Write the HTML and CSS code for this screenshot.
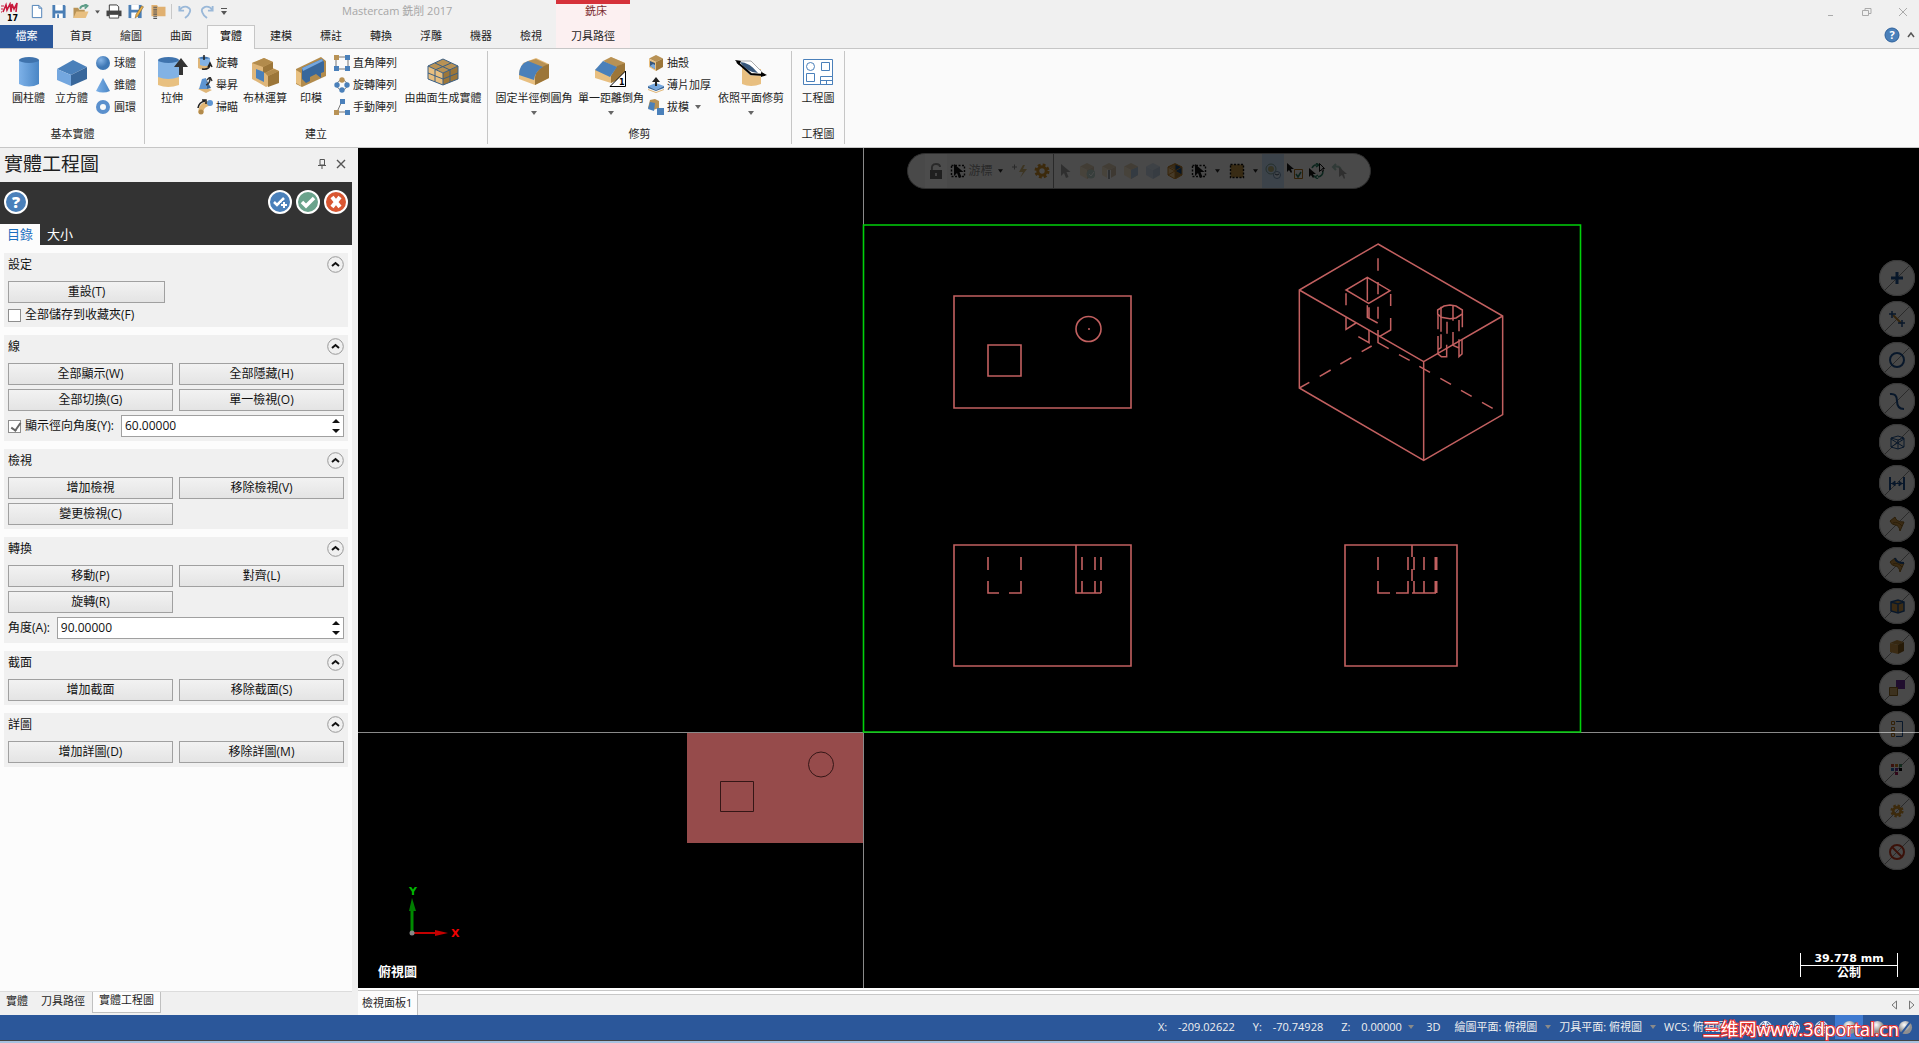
FILE: index.html
```html
<!DOCTYPE html>
<html lang="zh-Hant">
<head>
    <meta charset="UTF-8">
    <meta name="viewport" content="width=device-width, initial-scale=1.0">
    <title>Mastercam 銑削 2017</title>
    <link rel="stylesheet" href="styles.css">
</head>
<body>
    <!-- shared icons -->
    <svg class="defs" width="0" height="0" aria-hidden="true">
        <defs>
            <linearGradient id="blueGrad"><stop offset="0" stop-color="#7db1e8"/><stop offset="1" stop-color="#4a86c5"/></linearGradient>
            <radialGradient id="ball" cx=".35" cy=".3"><stop offset="0" stop-color="#86b4e6"/><stop offset="1" stop-color="#3f78b5"/></radialGradient>
            <radialGradient id="shade" cx=".4" cy=".3"><stop offset="0" stop-color="#fff"/><stop offset="1" stop-color="#8f8f8f"/></radialGradient>
        </defs>
        <symbol id="caret" viewBox="0 0 6 4"><path d="M0 0h6L3 4z" fill="currentColor"/></symbol>
        <symbol id="cursor" viewBox="0 0 16 16"><path d="M4 1v12l3-3 2 5 2.500-1-2-5h4z" fill="#222"/></symbol>
        <symbol id="cursor-box" viewBox="0 0 16 16"><path d="M1.500 2.500h13v11h-13z" fill="none" stroke="#111" stroke-width="1.400" stroke-dasharray="2 1.500"/><path d="M4 1v12l3-3 2 5 2.500-1-2-5h4z" fill="#111"/></symbol>
        <symbol id="gear" viewBox="0 0 16 16"><circle cx="8" cy="8" r="6" fill="none" stroke="#c88a28" stroke-width="3" stroke-dasharray="2.700 2"/><circle cx="8" cy="8" r="4.200" fill="none" stroke="#c88a28" stroke-width="3"/></symbol>
        <symbol id="box" viewBox="0 0 16 16"><path d="M8 0l7 3.500L8 7 1 3.500z" fill="#b89255"/><path d="M1 3.500L8 7v9l-7-4z" fill="#e8bf80"/><path d="M15 3.500L8 7v9l7-4z" fill="#9c7639"/></symbol>
        <symbol id="box-blue" viewBox="0 0 16 16"><path d="M8 0l7 3.500L8 7 1 3.500z" fill="#9db9dc"/><path d="M1 3.500L8 7v9l-7-4z" fill="#86a8d5"/><path d="M15 3.500L8 7v9l7-4z" fill="#5f86b8"/></symbol>
        <symbol id="chevron" viewBox="0 0 17 17"><circle cx="8.500" cy="8.500" r="7.800" fill="#f0f0f0" stroke="#999"/><path d="M5 10l3.500-3 3.500 3" fill="none" stroke="#111" stroke-width="2"/></symbol>
        <symbol id="updown" viewBox="0 0 8 14"><path d="M0 4h8L4 0zM0 10h8l-4 4z" fill="#111"/></symbol>
        <symbol id="globe" viewBox="0 0 16 16"><circle cx="8" cy="8" r="6.500" fill="none" stroke="#fff"/><path d="M8 1.500v13M1.500 8h13M3 4q5 3 10 0M3 12q5-3 10 0M8 1.500q-6 6 0 13 6-6 0-13" fill="none" stroke="#fff"/></symbol>
    </svg>

    <header class="titlebar">
        <div class="quick">
            <svg class="logo" viewBox="0 0 20 20"><path d="M3 10l3-7 1 5 3-6 1 7M11 10l1-8 2 5 3-6-1 9" fill="none" stroke="#c8193c" stroke-width="1.600"/><path d="M1 4h3M1 7h2M1 10h1" stroke="#c8193c"/><text x="7" y="19" class="logo-text">17</text></svg>
            <button class="q" aria-label="開新檔案"><svg viewBox="0 0 16 16"><path d="M3 1.500h7l3 3v10H3z" fill="#fff" stroke="#4a7eb5"/><path d="M10 1.500v3h3" fill="none" stroke="#4a7eb5"/></svg></button>
            <button class="q" aria-label="儲存"><svg viewBox="0 0 16 16"><path d="M1 1h13l1 1v13H1z" fill="#4a7eb5"/><path d="M4 1h8v6H4zM4 10h8v5H4z" fill="#fff"/><path d="M6 11h2v4H6z" fill="#4a7eb5"/></svg></button>
            <button class="q" aria-label="開啟"><svg viewBox="0 0 16 16"><path d="M0 4h5l1 2h6v9H0z" fill="#b89255"/><path d="M3 8h13l-3 7H0z" fill="#e8bf80"/><path d="M7 5q1-4 6-3M12 0l3 2-3 3" fill="none" stroke="#5e9d88" stroke-width="2"/></svg></button>
            <button class="q q-caret" aria-label="最近的檔案"><svg viewBox="0 0 6 4"><use href="#caret"/></svg></button>
            <button class="q" aria-label="列印"><svg viewBox="0 0 16 16"><path d="M3 1h8l2 2v5H3z" fill="#fff" stroke="#333"/><path d="M0 7h16v6H0z" fill="#444"/><path d="M3 11h10v4H3z" fill="#fff" stroke="#444"/></svg></button>
            <button class="q" aria-label="另存新檔"><svg viewBox="0 0 16 16"><path d="M0 1h14v14H0z" fill="#4a7eb5"/><path d="M3 1h8v5H3zM3 9h7v6H3z" fill="#fff"/><path d="M7 15l1-4 6-9 2 1-6 10z" fill="#e8b04a" stroke="#6d4d1c" stroke-width=".5"/></svg></button>
            <button class="q" aria-label="壓縮檔"><svg viewBox="0 0 16 16"><path d="M1 1h6l1 2h8v10H1z" fill="#e0b070"/><path d="M5 3v13" stroke="#555" stroke-width="4" stroke-dasharray="1 1"/></svg></button>
            <span class="q-sep"></span>
            <button class="q" aria-label="復原"><svg viewBox="0 0 16 16"><path d="M2 2v5h5M2 7q3-5 8-4 5 2 3 6-1 3-5 6" fill="none" stroke="#9ab8d8" stroke-width="2"/></svg></button>
            <button class="q" aria-label="重做"><svg viewBox="0 0 16 16"><path d="M14 2v5H9M14 7q-3-5-8-4-5 2-3 6 1 3 5 6" fill="none" stroke="#9ab8d8" stroke-width="2"/></svg></button>
            <button class="q q-more" aria-label="自訂"><svg viewBox="0 0 6 7"><path d="M0 0h6v1H0zM0 3h6L3 7z" fill="#555"/></svg></button>
        </div>
        <h1 class="app-title">Mastercam 銑削 2017</h1>
        <div class="context-title">銑床</div>
        <div class="window-buttons">
            <button aria-label="最小化"><svg viewBox="0 0 10 10"><path d="M2 8.500h5" stroke="#aaa"/></svg></button>
            <button aria-label="還原"><svg viewBox="0 0 10 10"><path d="M.5 3.500h6v5h-6zM3 3V1.500h6v5H7" fill="none" stroke="#aaa"/></svg></button>
            <button aria-label="關閉"><svg viewBox="0 0 10 10"><path d="M1 1l8 8M9 1L1 9" stroke="#aaa"/></svg></button>
        </div>
    </header>

    <nav class="tabs">
        <a href="#" class="tab file">檔案</a>
        <a href="#" class="tab">首頁</a>
        <a href="#" class="tab">繪圖</a>
        <a href="#" class="tab">曲面</a>
        <a href="#" class="tab active">實體</a>
        <a href="#" class="tab">建模</a>
        <a href="#" class="tab">標註</a>
        <a href="#" class="tab">轉換</a>
        <a href="#" class="tab">浮雕</a>
        <a href="#" class="tab">機器</a>
        <a href="#" class="tab">檢視</a>
        <a href="#" class="tab mill">刀具路徑</a>
        <div class="tabs-right">
            <button aria-label="說明"><svg width="16" height="16" viewBox="0 0 16 16"><circle cx="8" cy="8" r="7" fill="#4a80ba" stroke="#2d609b"/><text x="8" y="12" class="q-mark">?</text></svg></button>
            <button aria-label="收合功能區"><svg width="8" height="6" viewBox="0 0 8 6"><path d="M1 5l3-4 3 4" fill="none" stroke="#555" stroke-width="1.500"/></svg></button>
        </div>
    </nav>

    <section class="ribbon">
        <div class="group">
            <div class="group-body primitives">
                <button class="big"><svg viewBox="0 0 32 32"><path d="M6 4v24q10 5 20 0V4z" fill="url(#blueGrad)"/><ellipse cx="16" cy="4" rx="10" ry="3" fill="#3f73ad"/></svg>圓柱體</button>
                <button class="big"><svg viewBox="0 0 32 32"><path d="M17 4l14 7-16 8L1 13z" fill="#4a80ba"/><path d="M1 13l14 6v11L1 24z" fill="#74a7df"/><path d="M31 11v12l-16 7V19z" fill="#38679b"/></svg>立方體</button>
                <div class="small-col">
                    <button class="small"><svg viewBox="0 0 16 16"><circle cx="8" cy="8" r="7" fill="url(#ball)"/></svg>球體</button>
                    <button class="small"><svg viewBox="0 0 16 16"><path d="M8 1l7 13q-7 3-14 0z" fill="url(#blueGrad)"/></svg>錐體</button>
                    <button class="small"><svg viewBox="0 0 16 16"><circle cx="8" cy="8" r="5" fill="none" stroke="#5b90cd" stroke-width="4"/></svg>圓環</button>
                </div>
            </div>
            <div class="group-label">基本實體</div>
        </div>

        <div class="group">
            <div class="group-body create">
                <button class="big"><svg viewBox="0 0 32 32"><path d="M2 4v25q10 4 21 0V4z" fill="#e8c080"/><path d="M2 4v17q10 4 21 0V4z" fill="#82b2e4"/><ellipse cx="12.500" cy="4" rx="10.500" ry="3" fill="#3f73ad"/><path d="M23 19v-8h-5l7-9 7 9h-5v8z" fill="#333"/></svg>拉伸</button>
                <div class="small-col">
                    <button class="small"><svg viewBox="0 0 16 16"><path d="M1 3v10q6 3 12 0V3z" fill="#dfb679"/><path d="M3 3v7q5 2 10 0V3z" fill="#82b2e4"/><path d="M1 3q6-3 12 0-6 2-12 0" fill="#3f73ad"/><path d="M7 0v5M5 14q7 1 8-4M11 12l2-4 2 4" stroke="#222" stroke-width="1.500" fill="none"/></svg>旋轉</button>
                    <button class="small"><svg viewBox="0 0 16 16"><path d="M1 12l6-2 8 3-6 3z" fill="#dfb679"/><path d="M5 2l4-1 1 11H2z" fill="#5e95d2"/><path d="M9 2l5 9-4 1z" fill="#38679b"/><path d="M9 8q4-1 4-7M10 3l3-3 2 4" fill="none" stroke="#333" stroke-width="1.500"/></svg>舉昇</button>
                    <button class="small"><svg viewBox="0 0 16 16"><path d="M4 14Q3 6 13 4" fill="none" stroke="#e0b574" stroke-width="5"/><circle cx="4" cy="13" r="2.500" fill="#b28b4c"/><circle cx="13" cy="4" r="3" fill="#5e95d2"/><path d="M1 9q1-6 7-7M5 1h4v4" fill="none" stroke="#222" stroke-width="1.500"/></svg>掃瞄</button>
                </div>
                <button class="big"><svg viewBox="0 0 32 32"><path d="M3 7l12-5 9 4v6l6 3v11l-13 5-5-3-9-5z" fill="#dfb679"/><path d="M3 7l12-5 9 4-10 5zM16 17l9-4 5 2-11 5z" fill="#b28b4c"/><path d="M24 6v7l-8 4-2-1v-5zM19 20l11-5v12l-11 4z" fill="#9c7639"/><path d="M7 13l8 3v10l-8-4z" fill="#4a80ba"/></svg>布林運算</button>
                <button class="big"><svg viewBox="0 0 32 32"><path d="M1 13L26 1l5 4v15L7 31l-6-3z" fill="#b28b4c"/><path d="M1 14l5 3v13l-5-3z" fill="#e8c080"/><path d="M7 12L27 3l2 3v10l-3 1v5l-5-4-6 3v4l-4 2-4-4z" fill="#38679b"/><path d="M7 12L27 3l1 2-20 10z" fill="#74a7df"/></svg>印模</button>
                <div class="small-col">
                    <button class="small"><svg viewBox="0 0 16 16"><path d="M2 2h12v12H2z" fill="none" stroke="#777"/><path d="M0 0h5v5H0z" fill="#b89255"/><path d="M11 0h5v5h-5zM0 11h5v5H0zM11 11h5v5h-5z" fill="#4a80ba"/></svg>直角陣列</button>
                    <button class="small"><svg viewBox="0 0 16 16"><circle cx="8" cy="8" r="5" fill="none" stroke="#777"/><circle cx="8" cy="3" r="2.700" fill="#b89255"/><circle cx="3" cy="8" r="2.700" fill="#4a80ba"/><circle cx="13" cy="8" r="2.700" fill="#4a80ba"/><circle cx="8" cy="13" r="2.700" fill="#4a80ba"/></svg>旋轉陣列</button>
                    <button class="small"><svg viewBox="0 0 16 16"><path d="M8 2L3 13h10" fill="none" stroke="#777"/><path d="M0 11h5v5H0z" fill="#b89255"/><path d="M6 0h5v5H6zM11 11h5v5h-5z" fill="#4a80ba"/></svg>手動陣列</button>
                </div>
                <button class="big"><svg viewBox="0 0 32 32"><path d="M1 10l15-7 15 7-15 7z" fill="#b89255"/><path d="M1 10l15 7v12L1 23z" fill="#e8bf80"/><path d="M31 10l-15 7v12l15-6z" fill="#9c7639"/><path d="M1 10l15-7 15 7-15 7zM1 10v13l15 6 15-6V10M16 17v12M8 7l15 7v12M24 7L8 14v12M1 17l15 6 15-6" fill="none" stroke="#3b5f83"/></svg>由曲面生成實體</button>
            </div>
            <div class="group-label">建立</div>
        </div>

        <div class="group">
            <div class="group-body modify">
                <button class="big"><svg viewBox="0 0 32 32"><path d="M5 7l13-5 13 6v14l-14 7L1 23V16z" fill="#e8bf80"/><path d="M10 5l8-2 13 6-12 5z" fill="#b89255"/><path d="M31 8v14l-14 7V21q1-9 14-13" fill="#9c7639"/><path d="M1 19Q1 8 10 5l15 6q-8 4-9 13z" fill="#4a80ba"/></svg>固定半徑倒圓角<svg class="caret"><use href="#caret"/></svg></button>
                <button class="big"><svg viewBox="0 0 32 32"><path d="M0 14L16 1l14 6v13l-14 7L0 22z" fill="#e8bf80"/><path d="M8 5l8-4 14 6-9 4z" fill="#b89255"/><path d="M30 7v13l-14 7v-7l6-10z" fill="#9c7639"/><path d="M0 14L8 5l14 6-7 10z" fill="#4a80ba"/><path d="M15 30.500L30.500 15v15.500z" fill="#fff" stroke="#000"/><text x="24" y="29" class="one">1</text></svg>單一距離倒角<svg class="caret"><use href="#caret"/></svg></button>
                <div class="small-col">
                    <button class="small"><svg viewBox="0 0 16 16"><use href="#box"/><path d="M2 6l5 2v6l-5-3z" fill="#38577b"/><path d="M2 11l3-2 2 1v4z" fill="#7aa9dc"/></svg>抽殼</button>
                    <button class="small"><svg viewBox="0 0 16 16"><path d="M0 9l8-3 8 3-8 4z" fill="#74a7df"/><path d="M0 9l8 4v1l-8-3zM16 9l-8 4v1l8-3z" fill="#38679b"/><path d="M0 12l8 3 8-3v1l-8 3-8-3z" fill="#e0b574"/><path d="M7 9V5H4l4-5 4 5H9v4z" fill="#222"/></svg>薄片加厚</button>
                    <button class="small"><svg viewBox="0 0 16 16"><path d="M2 1l5-1 4 2v7l-6 2-5-2z" fill="#b89255"/><path d="M2 3l5 1-1 8-6-2z" fill="#4a80ba"/><path d="M9 9h7v7H9z" fill="#4a80ba"/></svg>拔模<svg class="caret"><use href="#caret"/></svg></button>
                </div>
                <button class="big"><svg viewBox="0 0 32 32"><path d="M7 12v16q9 4 19 0V13z" fill="#e8bf80"/><path d="M2 5h14l14 14H15z" fill="#fff" stroke="#aaa"/><path d="M5 6q9 0 18 11Q11 16 5 6" fill="#38577b"/><path d="M2 6l14 12 14 1" fill="none" stroke="#000" stroke-width="2"/><path d="M0 4l6 1-2 4zM32 19l-6-3v5z"/></svg>依照平面修剪<svg class="caret"><use href="#caret"/></svg></button>
            </div>
            <div class="group-label">修剪</div>
        </div>

        <div class="group">
            <div class="group-body drawing">
                <button class="big"><svg viewBox="0 0 32 32"><g fill="#fff" stroke="#4a80ba"><path d="M1.500 3.500h29v25h-29z"/><circle cx="8.500" cy="10.500" r="4"/><path d="M19.500 6.500h8v8h-8zM4.500 17.500h8v8h-8zM18.500 20.500h12v8h-12zM18.500 24.500h12M24.500 24.500v4"/></g></svg>工程圖</button>
            </div>
            <div class="group-label">工程圖</div>
        </div>
    </section>

    <main class="main">
        <aside class="side">
            <div class="panel-head">
                <h2>實體工程圖</h2>
                <button aria-label="釘選"><svg viewBox="0 0 10 10"><path d="M3 .500h4.500V6H3zM1 6.500h8M5 6v4" fill="none" stroke="#555"/></svg></button>
                <button aria-label="關閉面板"><svg viewBox="0 0 10 10"><path d="M1 1l8 8M9 1L1 9" stroke="#555" stroke-width="1.400"/></svg></button>
            </div>
            <div class="panel-bar">
                <div class="actions">
                    <button class="round" aria-label="說明"><svg viewBox="0 0 24 24"><circle cx="12" cy="12" r="11" fill="#4a80ba" stroke="#fff" stroke-width="2"/><text x="12" y="18" class="help-mark">?</text></svg></button>
                    <span class="spacer"></span>
                    <button class="round" aria-label="確定並建立新操作"><svg viewBox="0 0 24 24"><circle cx="12" cy="12" r="11" fill="#4a80ba" stroke="#fff" stroke-width="2"/><path d="M6 12l3 3 7-7" fill="none" stroke="#fff" stroke-width="2.500"/><path d="M16 11v8M12 15h8" stroke="#4a80ba" stroke-width="4"/><path d="M16 12v6M13 15h6" stroke="#fff" stroke-width="2"/></svg></button>
                    <button class="round" aria-label="確定"><svg viewBox="0 0 24 24"><circle cx="12" cy="12" r="11" fill="#6aa38c" stroke="#fff" stroke-width="2"/><path d="M6 12l4 4 8-8" fill="none" stroke="#fff" stroke-width="3.500"/></svg></button>
                    <button class="round" aria-label="取消"><svg viewBox="0 0 24 24"><circle cx="12" cy="12" r="11" fill="#d95732" stroke="#fff" stroke-width="2"/><path d="M8 7l8 10M16 7L8 17" stroke="#fff" stroke-width="4"/></svg></button>
                </div>
                <div class="page-tabs">
                    <a href="#" class="current">目錄</a>
                    <a href="#">大小</a>
                </div>
            </div>

            <div class="sections">
                <section class="card">
                    <h3>設定 <button class="fold" aria-label="收合設定"><svg viewBox="0 0 17 17"><use href="#chevron"/></svg></button></h3>
                    <button class="btn reset">重設(T)</button>
                    <label class="check"><input type="checkbox"> 全部儲存到收藏夾(F)</label>
                </section>
                <section class="card">
                    <h3>線 <button class="fold" aria-label="收合線"><svg viewBox="0 0 17 17"><use href="#chevron"/></svg></button></h3>
                    <div class="btn-grid">
                        <button class="btn">全部顯示(W)</button>
                        <button class="btn">全部隱藏(H)</button>
                        <button class="btn">全部切換(G)</button>
                        <button class="btn">單一檢視(O)</button>
                    </div>
                    <div class="field">
                        <label class="check"><input type="checkbox" checked> 顯示徑向角度(Y):</label>
                        <span class="spin"><input type="text" value="60.00000" aria-label="徑向角度"><svg viewBox="0 0 8 14"><use href="#updown"/></svg></span>
                    </div>
                </section>
                <section class="card">
                    <h3>檢視 <button class="fold" aria-label="收合檢視"><svg viewBox="0 0 17 17"><use href="#chevron"/></svg></button></h3>
                    <div class="btn-grid">
                        <button class="btn">增加檢視</button>
                        <button class="btn">移除檢視(V)</button>
                        <button class="btn">變更檢視(C)</button>
                    </div>
                </section>
                <section class="card">
                    <h3>轉換 <button class="fold" aria-label="收合轉換"><svg viewBox="0 0 17 17"><use href="#chevron"/></svg></button></h3>
                    <div class="btn-grid">
                        <button class="btn">移動(P)</button>
                        <button class="btn">對齊(L)</button>
                        <button class="btn">旋轉(R)</button>
                    </div>
                    <div class="field">
                        <label for="angle">角度(A):</label>
                        <span class="spin"><input type="text" id="angle" value="90.00000"><svg viewBox="0 0 8 14"><use href="#updown"/></svg></span>
                    </div>
                </section>
                <section class="card">
                    <h3>截面 <button class="fold" aria-label="收合截面"><svg viewBox="0 0 17 17"><use href="#chevron"/></svg></button></h3>
                    <div class="btn-grid">
                        <button class="btn">增加截面</button>
                        <button class="btn">移除截面(S)</button>
                    </div>
                </section>
                <section class="card">
                    <h3>詳圖 <button class="fold" aria-label="收合詳圖"><svg viewBox="0 0 17 17"><use href="#chevron"/></svg></button></h3>
                    <div class="btn-grid">
                        <button class="btn">增加詳圖(D)</button>
                        <button class="btn">移除詳圖(M)</button>
                    </div>
                </section>
            </div>

            <div class="side-tabs">
                <a href="#">實體</a>
                <a href="#">刀具路徑</a>
                <a href="#" class="current">實體工程圖</a>
            </div>
        </aside>

        <section class="view">
            <div class="canvas">
                <svg class="drawing-area" viewBox="358 148 1561 840" preserveAspectRatio="xMinYMin meet">
                    <!-- shaded part -->
                    <path d="M687 733h176v110H687z" fill="#964b4b"/>
                    <g fill="none" stroke="#351616">
                        <path d="M720.500 781.500h33v30h-33z"/>
                        <circle cx="821" cy="764.500" r="12.500"/>
                    </g>
                    <!-- axes -->
                    <path d="M863.500 148v840M358 732.500h1561" stroke="#8a8a8a"/>
                    <!-- sheet -->
                    <path d="M863.500 225h717v507h-717z" fill="none" stroke="#00d00a" stroke-width="1.600"/>
                    <g fill="none" stroke="#c26060" stroke-width="1.600">
                        <!-- top view -->
                        <path d="M954 296h177v112H954zM988 345h33v31h-33z"/>
                        <circle cx="1088.500" cy="329" r="12.500"/>
                        <path d="M1088 329h2"/>
                        <!-- front view -->
                        <path d="M954 545h177v121H954zM1076 545v48h25"/>
                        <path d="M988 557v13M988 581v12h11M1021 557v13M1021 581v12h-12M1082 557v13M1082 581v12M1095 557v13M1095 581v12M1101 557v13M1101 581v12"/>
                        <!-- side view -->
                        <path d="M1345 545h112v121h-112zM1412 545v12M1412 569v12"/>
                        <path d="M1378 557v13M1378 581v12h12M1408 557v13M1408 581v12h-12M1414 557v13M1414 581v12M1424 557v13M1424 581v12M1412 593h24"/>
                        <path d="M1436 557v13M1436 581v12" stroke-width="3"/>
                    </g>
                    <!-- isometric view -->
                    <svg x="1280" y="230" width="240" height="250" viewBox="0 0 720 750">
                        <g fill="none" stroke="#c26060" stroke-width="4.500">
                            <path d="M294 42L668 258V554L431 691L58 474V180zM58 180L431 395V691M431 395L668 258"/>
                            <path d="M262 142L330 182L266 220L198 180zM262 142V212"/>
                            <path d="M294 85v37M294 156v37M294 230v36M294 300v38l32 18M198 190v36M198 262v36l30-19M332 192v36M332 264v36l-34 20M262 226v36l31 17M267 232v32M267 300v38l-32-18"/>
                            <path d="M58 474l30-17M119 439l33-19M181 402l33-19M245 365l30-17M357 374l32 17M418 409l32 18M481 445l32 18M543 481l32 18M606 517l32 18"/>
                            <path d="M473 240L492 228L510 225L528 228L547 240V252L528 264L510 266L484 262L473 252z"/>
                            <path d="M474 252v46M483 230v75M519 226v46M501 275v36M537 270v34M547 252v40M474 318v54l10 8h16v-36M483 313v40l-9 6M519 306v40l18 8M537 328v52l9-8v-44"/>
                        </g>
                    </svg>
                    <!-- coordinate triad -->
                    <path d="M412 932V908" stroke="#008a00" stroke-width="3"/><path d="M409 911l3-13 4 13z" fill="#007d00"/>
                    <path d="M413 933h24" stroke="#c40000" stroke-width="2"/><path d="M435 930l13 3-13 3z" fill="#c40000"/>
                    <circle cx="412" cy="933" r="2.500" fill="#888"/>
                    <text x="409" y="895" class="axis-label" fill="#00b400">Y</text>
                    <text x="451" y="937" class="axis-label" fill="#f00000">X</text>
                    <text x="378" y="976" class="view-name">俯視圖</text>
                    <!-- scale bar -->
                    <path d="M1800.500 953v24M1897.500 953v24M1800 965.500h98" stroke="#fff"/>
                    <text x="1849" y="962" class="scale-text">39.778 mm</text>
                    <text x="1849" y="977" class="scale-unit">公制</text>
                </svg>

                <div class="select-bar">
                    <button class="tool lock" aria-label="鎖定"><svg viewBox="0 0 16 16"><path d="M2 7h12v9H2z" fill="#666"/><path d="M4 7q-1-6 4-6 4 0 4 3" fill="none" stroke="#888" stroke-width="2"/><path d="M7 10h2v3H7z" fill="#ddd"/></svg></button>
                    <button class="tool" aria-label="自動游標"><svg viewBox="0 0 16 16"><use href="#cursor-box"/></svg></button>
                    <span class="tool-text">游標</span>
                    <button class="tool drop" aria-label="游標選項"><svg class="caret"><use href="#caret"/></svg></button>
                    <button class="tool" aria-label="快速點"><svg viewBox="0 0 16 16"><path d="M0 4h5M2.500 1.500v5" stroke="#888"/><path d="M11 2L7 9h4l-3 6 7-9h-4l2-4z" fill="#c9ae70"/></svg></button>
                    <button class="tool" aria-label="選取設定"><svg viewBox="0 0 16 16"><use href="#gear"/></svg></button>
                    <span class="tool-sep"></span>
                    <button class="tool dim" aria-label="選取"><svg viewBox="0 0 16 16"><use href="#cursor"/></svg></button>
                    <button class="tool dim" aria-label="選取實體"><svg viewBox="0 0 16 16"><use href="#box"/><circle cx="12" cy="11" r="4.500" fill="#5e9d88"/><path d="M10 11l2 2 3-4" fill="none" stroke="#fff"/></svg></button>
                    <button class="tool dim" aria-label="選取邊界"><svg viewBox="0 0 16 16"><use href="#box"/><path d="M8 7v9" stroke="#fff" stroke-width="4"/><path d="M8 7v9" stroke="#123" stroke-width="2"/></svg></button>
                    <button class="tool dim" aria-label="選取面"><svg viewBox="0 0 16 16"><use href="#box"/><path d="M15 4L8 7v9l7-4z" fill="#4a80ba"/></svg></button>
                    <button class="tool dim" aria-label="選取主體"><svg viewBox="0 0 16 16"><use href="#box-blue"/></svg></button>
                    <button class="tool" aria-label="選取背面"><svg viewBox="0 0 16 16"><use href="#box"/><path d="M8 1l7 3v8l-7-4z" fill="#154a80"/><path d="M1 4l7-3 7 3v8l-7 4-7-4zM1 4l14 8M8 1v15M1 12l14-8" fill="none" stroke="#b87c28"/></svg></button>
                    <button class="tool wide" aria-label="選取方式"><svg viewBox="0 0 16 16"><use href="#cursor-box"/></svg></button>
                    <button class="tool drop small-drop" aria-label="選取方式選項"><svg class="caret"><use href="#caret"/></svg></button>
                    <button class="tool wide" aria-label="範圍內"><svg viewBox="0 0 16 16"><path d="M1.500 1.500h13v13h-13z" fill="#b98e42" stroke="#111" stroke-width="1.400" stroke-dasharray="2 1.500"/></svg></button>
                    <button class="tool drop small-drop" aria-label="範圍選項"><svg class="caret"><use href="#caret"/></svg></button>
                    <button class="tool on" aria-label="驗證選取"><svg viewBox="0 0 16 16"><circle cx="6" cy="6" r="5" fill="none" stroke="#7a9d94"/><circle cx="6" cy="6" r="3" fill="#b3ac78"/><circle cx="12" cy="12" r="3.500" fill="#d8e6f5" stroke="#6e8cab"/><path d="M10 11l2 1 2-1" fill="none" stroke="#456"/></svg></button>
                    <button class="tool" aria-label="選取有效"><svg viewBox="0 0 16 16"><path d="M0 0v9l2-2 2 3 1-1-1-3h3z" fill="#111"/><path d="M7.500 6.500h8v9h-8z" fill="#eee" stroke="#a86e1d"/><path d="M9 11l2 3 3-5" fill="none" stroke="#287a60" stroke-width="1.500"/></svg></button>
                    <button class="tool" aria-label="反向選取"><svg viewBox="0 0 16 16"><path d="M3 5q2-4 6-3M14 8q0 5-5 6M2 9q1 4 5 5M7 0l3 2-3 2M9 12l-3 2 3 2" fill="none" stroke="#287a60" stroke-width="1.500"/><path d="M0 5v9l2-2 2 3 1-1-1-3h3z" fill="#111"/><path d="M10.500 .500v8l2-2 1 2 1-1-1-2h2z" fill="#eee" stroke="#111"/></svg></button>
                    <button class="tool dim" aria-label="上次選取"><svg viewBox="0 0 16 16"><path d="M5 1L2 4l3 3M2 4q7-2 8 3" fill="none" stroke="#287a60" stroke-width="2"/><path d="M8 4v10l3-2 2 4 1-1-1-4h3z" fill="#222"/></svg></button>
                </div>

                <div class="quick-masks">
                    <button class="mask" aria-label="點"><svg viewBox="0 0 36 36"><path d="M6 30L30 6" class="slash"/><path d="M18 12v12M12 18h12" stroke="#1d4e8a" stroke-width="3"/></svg></button>
                    <button class="mask" aria-label="線"><svg viewBox="0 0 36 36"><path d="M6 30L30 6" class="slash"/><path d="M14 14l8 8" stroke="#b07a28" stroke-width="2"/><path d="M13 10v7M10 13h7M23 19v7M19 22h7" stroke="#1d4e8a" stroke-width="1.500"/></svg></button>
                    <button class="mask" aria-label="圓弧"><svg viewBox="0 0 36 36"><path d="M6 30L30 6" class="slash"/><circle cx="18" cy="18" r="7" fill="none" stroke="#1d4e8a" stroke-width="2"/></svg></button>
                    <button class="mask" aria-label="曲線"><svg viewBox="0 0 36 36"><path d="M6 30L30 6" class="slash"/><path d="M11 11q7-1 7 7t7 8" fill="none" stroke="#1d4e8a" stroke-width="2"/></svg></button>
                    <button class="mask" aria-label="線架構"><svg viewBox="0 0 36 36"><path d="M6 30L30 6" class="slash"/><path d="M12 14l7-2 6 2v9l-6 2-7-2zM12 14l7 2 6-2M12 23l13-8M19 16v9M12 15l13 8" fill="none" stroke="#1d4e8a"/></svg></button>
                    <button class="mask" aria-label="標註"><svg viewBox="0 0 36 36"><path d="M6 30L30 6" class="slash"/><path d="M11 12v13M25 12v13" stroke="#1d4e8a" stroke-width="2"/><path d="M12 18.500h12M16 16l-3 2.500 3 2.500zM20 16l3 2.500-3 2.500z" stroke="#1d4e8a" fill="#1d4e8a"/></svg></button>
                    <button class="mask" aria-label="曲面"><svg viewBox="0 0 36 36"><path d="M6 30L30 6" class="slash"/><path d="M11 15l5-4q1 5 9 5l-4 9q-1-6-5-6-3 0-5-4zM14 17q5-2 9 3" fill="#c39042" stroke="#8d6420"/></svg></button>
                    <button class="mask" aria-label="曲面曲線"><svg viewBox="0 0 36 36"><path d="M6 30L30 6" class="slash"/><path d="M11 15l5-4q1 5 9 5l-4 9q-1-6-5-6-3 0-5-4zM14 17q5-2 9 3" fill="#c39042" stroke="#8d6420"/><path d="M16 11q1 5 9 5" fill="none" stroke="#1d4e8a" stroke-width="2"/></svg></button>
                    <button class="mask" aria-label="網格"><svg viewBox="0 0 36 36"><path d="M6 30L30 6" class="slash"/><path d="M12 14l7-2 6 2v9l-6 2-7-2z" fill="#c39042"/><path d="M12 14l7-2 6 2v9l-6 2-7-2zM12 14l7 2 6-2M19 16v9" fill="none" stroke="#1d4e8a" stroke-width="1.500"/></svg></button>
                    <button class="mask" aria-label="實體"><svg viewBox="0 0 36 36"><path d="M6 30L30 6" class="slash"/><path d="M11 14l7-3 7 2-6 3z" fill="#b08038"/><path d="M11 14l8 2v9l-8-2z" fill="#c39042"/><path d="M25 13v9l-6 3v-9z" fill="#7d5718"/></svg></button>
                    <button class="mask" aria-label="群組"><svg viewBox="0 0 36 36"><path d="M6 30L30 6" class="slash"/><path d="M17 10h9v9h-9z" fill="#6b2f9a"/><path d="M10.500 17.500h8v8h-8z" fill="#c8a265" stroke="#8d6420"/></svg></button>
                    <button class="mask" aria-label="結果"><svg viewBox="0 0 36 36"><path d="M12.500 10.500h3v3h-3zM12.500 16.500h3v3h-3zM12.500 22.500h3v3h-3z" fill="none" stroke="#a86e1d"/><path d="M17 10.500h6.500v15H17" fill="none" stroke="#1d4e8a"/></svg></button>
                    <button class="mask" aria-label="顏色"><svg viewBox="0 0 36 36"><path d="M6 30L30 6" class="slash"/><path d="M12 12h3v3h-3z" fill="#c0392b"/><path d="M16 12h3v3h-3z" fill="#c87a1e"/><path d="M20 12h3v3h-3z" fill="#3d8a60"/><path d="M12 16h3v3h-3z" fill="#2b6cb0"/><path d="M16 16h3v3h-3z" fill="#6b2f9a"/><path d="M20 16h3v3h-3z" fill="#000"/><path d="M16 20h3v3h-3z" fill="#a01850"/></svg></button>
                    <button class="mask" aria-label="進階"><svg viewBox="0 0 36 36"><path d="M6 30L30 6" class="slash"/><use href="#gear" x="11" y="11" width="14" height="14"/></svg></button>
                    <button class="mask" aria-label="清除"><svg viewBox="0 0 36 36"><path d="M6 30L30 6" class="slash"/><circle cx="18" cy="18" r="7" fill="none" stroke="#c03a20" stroke-width="2"/><path d="M13 13l10 10" stroke="#c03a20" stroke-width="2"/></svg></button>
                </div>
            </div>

            <div class="sheet-tabs">
                <a href="#" class="sheet">檢視面板1</a>
                <div class="sheet-nav">
                    <button aria-label="上一頁"><svg viewBox="0 0 6 10"><path d="M5.500 1v8L1 5z" fill="none" stroke="#777"/></svg></button>
                    <button aria-label="下一頁"><svg viewBox="0 0 6 10"><path d="M.5 1v8L5 5z" fill="none" stroke="#777"/></svg></button>
                </div>
            </div>
        </section>
    </main>

    <footer class="status">
        <span class="axis">X:</span><span class="num">-209.02622</span>
        <span class="axis">Y:</span><span class="num">-70.74928</span>
        <span class="axis">Z:</span><span class="num-z">0.00000</span>
        <svg class="caret"><use href="#caret"/></svg>
        <span class="mode">3D</span>
        <span class="plane">繪圖平面: 俯視圖</span>
        <svg class="caret"><use href="#caret"/></svg>
        <span class="plane">刀具平面: 俯視圖</span>
        <svg class="caret"><use href="#caret"/></svg>
        <span class="wcs">WCS: 俯視圖</span>
        <div class="shading">
            <button aria-label="線架構"><svg viewBox="0 0 16 16"><use href="#globe"/></svg></button>
            <button aria-label="虛線"><svg viewBox="0 0 16 16"><use href="#globe"/></svg></button>
            <button aria-label="無隱藏"><svg viewBox="0 0 16 16"><use href="#globe"/></svg></button>
            <button class="on" aria-label="邊框著色"><svg viewBox="0 0 16 16"><circle cx="8" cy="8" r="7" fill="url(#shade)"/></svg></button>
            <button aria-label="著色"><svg viewBox="0 0 16 16"><circle cx="8" cy="8" r="7" fill="url(#shade)"/></svg></button>
            <button aria-label="半透明"><svg viewBox="0 0 16 16"><circle cx="8" cy="8" r="7" fill="url(#shade)"/><path d="M3 15L14 1" stroke="#2b579a" stroke-width="2"/></svg></button>
        </div>
        <div class="watermark">三维网www.3dportal.cn</div>
    </footer>
    <div class="taskbar"></div>
</body>
</html>
```

FILE: styles.css
```css
* {
    box-sizing: border-box;
}
body {
    margin: 0;
    height: 100vh;
    display: flex;
    flex-direction: column;
    overflow: hidden;
    background-color: #f0f0f0;
    color: #1e1e1e;
    font-family: "Open Sans", "Noto Sans CJK TC", sans-serif;
    font-size: 11px;
    line-height: 16px;
}
button {
    margin: 0;
    padding: 0;
    border: none;
    background: none;
    color: inherit;
    font: inherit;
}
a {
    color: inherit;
    text-decoration: none;
}
h1, h2, h3 {
    margin: 0;
    font-weight: 400;
}
svg {
    display: block;
}
.defs {
    position: absolute;
}
.caret {
    width: 6px;
    height: 4px;
    color: #666;
}

/* title bar */
.titlebar {
    display: grid;
    grid-template-columns: 342px 214px 74px 1fr;
    height: 25px;
    flex: none;
}
.quick {
    display: flex;
    align-items: center;
    padding-top: 1px;
    padding-bottom: 3px;
}
.logo {
    width: 20px;
    height: 20px;
    margin-right: 6px;
}
.logo-text {
    font: bold 8px "DejaVu Sans", sans-serif;
}
.q {
    width: 22px;
    height: 20px;
    display: flex;
    align-items: center;
    justify-content: center;
}
.q svg {
    width: 16px;
    height: 15px;
}
.q-caret {
    width: 11px;
}
.q-caret svg {
    width: 5px;
    height: 4px;
    color: #555;
}
.q-more {
    width: 12px;
}
.q-more svg {
    width: 6px;
    height: 7px;
}
.q-sep {
    width: 1px;
    height: 15px;
    margin: 0 2px;
    background-color: #c8c8c8;
}
.app-title {
    color: #a6a6a6;
    font-size: 11px;
    line-height: 22px;
}
.context-title {
    border-top: 4px solid #d6313a;
    background-color: #fcf0f1;
    color: #7b2d30;
    text-align: center;
    padding: 0 8px 0 14px;
    line-height: 14px;
}
.window-buttons {
    display: flex;
    justify-content: flex-end;
    align-items: center;
    gap: 26px;
    padding: 0 11px 2px 0;
}
.window-buttons svg {
    width: 10px;
    height: 10px;
}

/* ribbon tabs */
.tabs {
    display: flex;
    flex: none;
    height: 24px;
    border-bottom: 1px solid #c6c6c6;
}
.tab {
    width: 50px;
    text-align: center;
    line-height: 22px;
}
.tab.file {
    width: 53px;
    margin-right: 3px;
    background-color: #2b579a;
    color: #fff;
}
.tab.active {
    width: 48px;
    height: 24px;
    margin: 0 1px;
    border: 1px solid #c6c6c6;
    border-bottom: none;
    background-color: #fafafa;
    line-height: 20px;
    color: #000;
}
.tab.mill {
    width: 74px;
    background-color: #fcf0f1;
}
.tabs-right {
    margin-left: auto;
    display: flex;
    align-items: center;
    gap: 7px;
    padding: 0 4px 4px 0;
}
.q-mark {
    fill: #fff;
    font-size: 11px;
    font-weight: bold;
    text-anchor: middle;
}

/* ribbon */
.ribbon {
    display: flex;
    flex: none;
    height: 99px;
    background-color: #fafafa;
    border-bottom: 1px solid #c6c6c6;
    padding: 2px 0 3px 1px;
}
.group {
    border-right: 1px solid #c6c6c6;
    padding-top: 1px;
}
.group-body {
    display: grid;
    height: 74px;
}
.primitives {
    grid-template-columns: 43px 43px 45px;
    padding: 0 6px;
}
.create {
    grid-template-columns: 46px 45px 50px 42px 67px 88px;
    padding-left: 4px;
}
.modify {
    grid-template-columns: 84px 70px 68px 74px;
    padding: 0 3px 0 4px;
}
.drawing {
    grid-template-columns: 52px;
}
.big {
    display: flex;
    flex-direction: column;
    align-items: center;
    gap: 2px;
    padding-top: 4px;
    white-space: nowrap;
}
.big > svg:first-child {
    width: 32px;
    height: 32px;
}
.big .caret {
    margin-top: 3px;
}
.small-col {
    padding-left: 2px;
}
.small {
    display: flex;
    align-items: center;
    gap: 3px;
    height: 22px;
    white-space: nowrap;
}
.small > svg:first-child {
    width: 16px;
    height: 16px;
}
.small .caret {
    margin-left: 3px;
}
.group-label {
    text-align: center;
}
.one {
    font: bold 8px "DejaVu Sans", sans-serif;
}

/* side panel */
.main {
    display: flex;
    flex: 1;
    min-height: 0;
}
.side {
    width: 358px;
    flex: none;
    display: flex;
    flex-direction: column;
    padding-right: 6px;
    background-color: #f0f0f0;
}
.panel-head {
    display: flex;
    align-items: center;
    gap: 9px;
    height: 34px;
    padding: 0 6px 2px 4px;
}
.panel-head h2 {
    flex: 1;
    font-size: 19px;
    line-height: 32px;
}
.panel-head svg {
    width: 10px;
    height: 10px;
}
.panel-bar {
    background-color: #333;
    height: 63px;
    display: flex;
    flex-direction: column;
    justify-content: space-between;
}
.actions {
    display: flex;
    gap: 4px;
    padding: 8px 4px 0;
}
.spacer {
    flex: 1;
}
.round svg {
    width: 24px;
    height: 24px;
}
.help-mark {
    fill: #fff;
    font-size: 16px;
    font-weight: 800;
    text-anchor: middle;
}
.page-tabs {
    display: flex;
    color: #fff;
    font-size: 13px;
    line-height: 21px;
}
.page-tabs a {
    padding: 0 7px;
}
.page-tabs .current {
    background-color: #fcfcfc;
    color: #1a6fc0;
}
.sections {
    flex: 1;
    display: flex;
    flex-direction: column;
    gap: 8px;
    padding: 8px 4px;
    background-color: #fcfcfc;
    border-bottom: 1px solid #dcdcdc;
    font-size: 12px;
    color: #111;
}
.card {
    background-color: #f0f0f0;
    padding: 0 4px 4px;
}
.card h3 {
    display: flex;
    justify-content: space-between;
    align-items: center;
    height: 28px;
    padding-bottom: 5px;
    font-size: 12px;
}
.fold svg {
    width: 17px;
    height: 17px;
}
.btn {
    height: 22px;
    border: 1px solid #a0a0a0;
    background-image: linear-gradient(#f2f2f2, #e4e4e4);
    line-height: 20px;
    text-align: center;
}
.reset {
    display: block;
    width: 157px;
    margin-bottom: 4px;
}
.btn-grid {
    display: grid;
    grid-template-columns: 1fr 1fr;
    gap: 4px 6px;
}
.check {
    display: flex;
    align-items: center;
    gap: 4px;
    height: 16px;
    white-space: nowrap;
}
.check input {
    appearance: none;
    width: 13px;
    height: 13px;
    margin: 0;
    border: 1px solid #8e8e8e;
    background-color: #fff;
}
.check input:checked::after {
    content: "";
    display: block;
    width: 4px;
    height: 8px;
    margin: 0 0 0 4px;
    border: solid #666;
    border-width: 0 2px 2px 0;
    transform: rotate(35deg);
}
.field {
    display: flex;
    align-items: center;
    gap: 7px;
    height: 22px;
    margin-top: 4px;
}
.spin {
    flex: 1;
    position: relative;
}
.spin input {
    display: block;
    width: 100%;
    height: 22px;
    padding: 0 3px 2px;
    border: 1px solid #a0a0a0;
    background-color: #fff;
    color: #111;
    font: inherit;
}
.spin svg {
    position: absolute;
    right: 4px;
    top: 4px;
    width: 8px;
    height: 14px;
}
.side-tabs {
    display: flex;
    gap: 1px;
    height: 23px;
    line-height: 18px;
}
.side-tabs a {
    padding: 0 6px;
    height: 21px;
}
.side-tabs .current {
    background-color: #fcfcfc;
    border: 1px solid #c0c0c0;
    border-top: none;
    line-height: 16px;
}

/* graphics window */
.view {
    flex: 1;
    min-width: 0;
    display: flex;
    flex-direction: column;
}
.canvas {
    position: relative;
    flex: 1;
    min-height: 0;
    background-color: #000;
    overflow: hidden;
}
.drawing-area {
    width: 100%;
    height: 100%;
}
.axis-label {
    font: bold 11px "DejaVu Sans", sans-serif;
}
.view-name {
    fill: #fff;
    font-size: 13px;
    font-weight: 700;
}
.scale-text {
    fill: #fff;
    font: bold 11px "DejaVu Sans", sans-serif;
    text-anchor: middle;
}
.scale-unit {
    fill: #fff;
    font-size: 12px;
    font-weight: 700;
    text-anchor: middle;
}
.select-bar {
    position: absolute;
    top: 5px;
    left: 50%;
    transform: translateX(-50%);
    display: flex;
    align-items: center;
    width: 464px;
    height: 36px;
    padding-left: 17px;
    border: 1px solid #999;
    border-radius: 18px;
    background-color: #f0f0f0;
    opacity: 0.3;
}
.tool {
    width: 22px;
    height: 34px;
    flex: none;
    display: flex;
    align-items: center;
    justify-content: center;
}
.tool svg {
    width: 16px;
    height: 16px;
}
.tool.wide {
    width: 26px;
}
.tool.drop {
    width: 16px;
}
.tool.small-drop {
    width: 12px;
}
.tool .caret {
    width: 5px;
    height: 4px;
    color: #222;
}
.tool.dim svg {
    opacity: 0.4;
}
.tool.on {
    background-color: #c5dcf5;
}
.tool.lock {
    background-color: #fbfbfb;
}
.tool-text {
    color: #888;
    font-size: 12px;
}
.tool-sep {
    width: 1px;
    height: 34px;
    background-color: #888;
}
.quick-masks {
    position: absolute;
    top: 112px;
    right: 4px;
    display: flex;
    flex-direction: column;
    gap: 5px;
    opacity: 0.3;
}
.mask {
    border-radius: 50%;
    background-color: #f0f0f0;
    box-shadow: inset 0 0 0 1px #bbb;
}
.mask svg {
    width: 36px;
    height: 36px;
}
.slash {
    stroke: #8a8a8a;
}

/* sheet tabs */
.sheet-tabs {
    display: flex;
    height: 27px;
    flex: none;
    border-top: 2px solid #fff;
    background-image: linear-gradient(#c8c8c8 1px, #fff 1px, #fff 4px, #c8c8c8 4px, #c8c8c8 5px, #f0f0f0 5px);
}
.sheet {
    margin-top: 1px;
    padding: 4px 4px 0;
    min-width: 60px;
    border-right: 1px solid #c0c0c0;
    background-color: #fcfcfc;
}
.sheet-nav {
    margin-left: auto;
    display: flex;
    align-items: center;
    gap: 12px;
    padding: 5px 4px 0 0;
}
.sheet-nav svg {
    width: 6px;
    height: 10px;
}

/* status bar */
.status {
    position: relative;
    flex: none;
    display: flex;
    align-items: center;
    justify-content: flex-end;
    height: 25px;
    padding-bottom: 1px;
    background-color: #2b579a;
    color: #f0f0f0;
    white-space: nowrap;
}
.axis {
    width: 20px;
}
.num {
    margin-right: 18px;
}
.num-z {
    width: 47px;
}
.status .caret {
    color: #8a8a8a;
    width: 6px;
}
.mode {
    margin: 0 14px 0 12px;
}
.plane {
    margin-right: 8px;
}
.status .caret + .plane, .wcs {
    margin-left: 8px;
}
.wcs {
    width: 87px;
}
.shading {
    display: flex;
    height: 100%;
}
.shading button {
    width: 28px;
    height: 100%;
    display: flex;
    align-items: center;
    justify-content: center;
}
.shading .on {
    background-color: #3f7ad0;
}
.shading svg {
    width: 15px;
    height: 15px;
}
.watermark {
    position: absolute;
    right: 20px;
    bottom: 0;
    color: #fff;
    font-family: "Open Sans", "Noto Sans CJK SC", sans-serif;
    font-size: 18px;
    line-height: 22px;
    -webkit-text-stroke: 2px #e8302c;
    paint-order: stroke fill;
}
.taskbar {
    height: 3px;
    flex: none;
    border-top: 1px solid #444;
    background-color: #a9c3e0;
}
```
